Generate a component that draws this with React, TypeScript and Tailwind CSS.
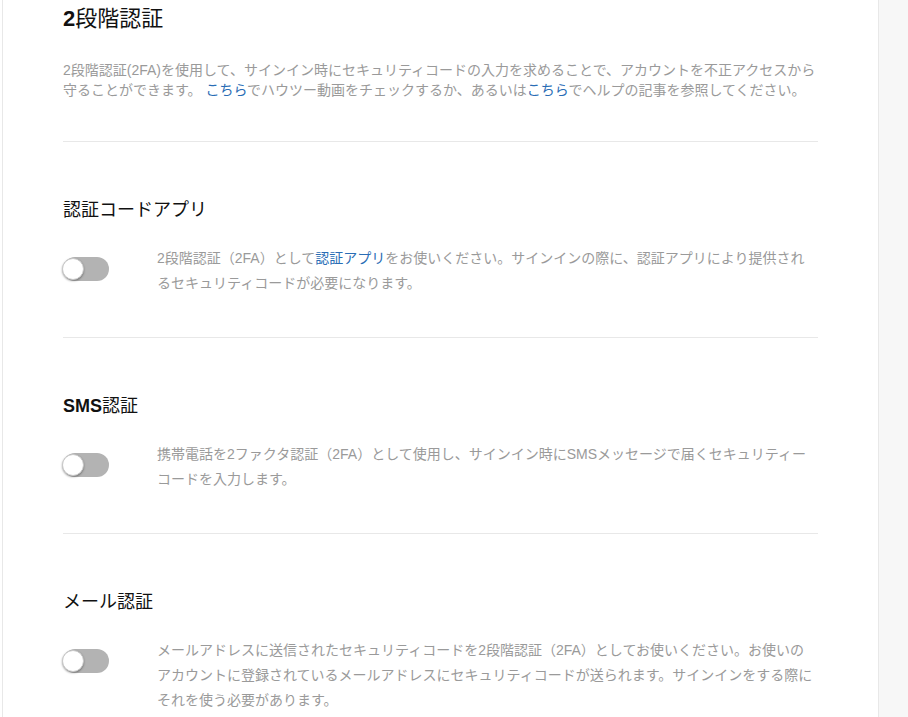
import type { ReactNode } from "react";

const font = {
  fontFamily: '"Liberation Sans", "Noto Sans CJK JP", sans-serif',
};

interface Method {
  id: string;
  title: ReactNode;
  body: ReactNode;
}

function Toggle() {
  return (
    <button
      type="button"
      className="relative mt-[11px] h-6 w-[46px] shrink-0 rounded-full bg-[#b3b3b3]"
      aria-pressed="false"
    >
      <span className="absolute -left-px top-[1px] h-[22px] w-[22px] rounded-full border border-[#c8c8c8] bg-white shadow-[0_1px_2px_rgba(0,0,0,0.35)]" />
    </button>
  );
}

const Link = ({ children }: { children: ReactNode }) => (
  <a href="#" className="text-[#2a6db5]">
    {children}
  </a>
);

const methods: Method[] = [
  {
    id: "app",
    title: "認証コードアプリ",
    body: (
      <>
        2段階認証（2FA）として<Link>認証アプリ</Link>
        をお使いください。サインインの際に、認証アプリにより提供されるセキュリティコードが必要になります。
      </>
    ),
  },
  {
    id: "sms",
    title: (
      <>
        <span className="font-bold">SMS</span>認証
      </>
    ),
    body: "携帯電話を2ファクタ認証（2FA）として使用し、サインイン時にSMSメッセージで届くセキュリティーコードを入力します。",
  },
  {
    id: "mail",
    title: "メール認証",
    body: "メールアドレスに送信されたセキュリティコードを2段階認証（2FA）としてお使いください。お使いのアカウントに登録されているメールアドレスにセキュリティコードが送られます。サインインをする際にそれを使う必要があります。",
  },
];

export default function App() {
  return (
    <div className="flex min-h-screen bg-white" style={font}>
      <div className="w-[2px] shrink-0" />
      <main className="w-[876px] shrink-0 border-l border-[#e8e8e8] px-[60px]">
        <h1 className="flex h-9 items-center text-[22px] text-[#111]">
          <span className="font-bold">2</span>段階認証
        </h1>
        <p className="mt-6 text-sm leading-5 text-[#9a9a9a]">
          2段階認証(2FA)を使用して、サインイン時にセキュリティコードの入力を求めることで、アカウントを不正アクセスから守ることができます。{" "}
          <Link>こちら</Link>でハウツー動画をチェックするか、あるいは<Link>こちら</Link>
          でヘルプの記事を参照してください。
        </p>

        {methods.map((m) => (
          <section key={m.id} className="mt-[41px] border-t border-[#e8e8e8] pt-[55px]">
            <h2 className="text-lg leading-[27px] text-[#111]">{m.title}</h2>
            <div className="mt-[22px] flex items-start gap-12">
              <Toggle />
              <p className="w-[660px] text-sm leading-[25px] text-[#9a9a9a]">{m.body}</p>
            </div>
          </section>
        ))}
      </main>
      <aside className="flex-1 border-l border-[#e8e8e8] bg-[#f7f7f7]" />
    </div>
  );
}
